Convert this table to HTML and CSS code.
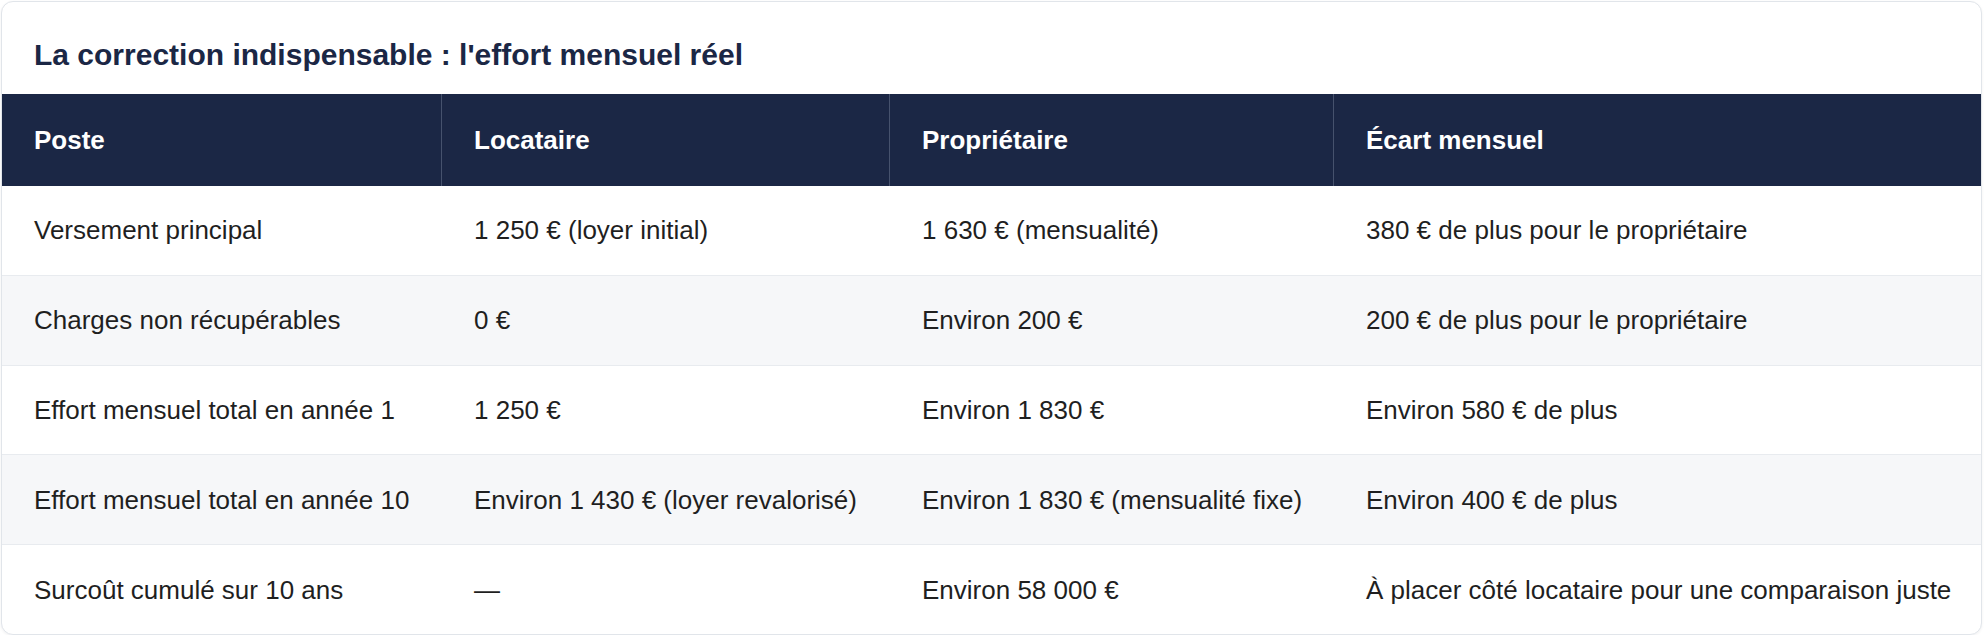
FILE: index.html
```html
<!DOCTYPE html>
<html lang="fr">
<head>
<meta charset="utf-8">
<title>L'effort mensuel réel</title>
<link rel="stylesheet" href="styles.css">
</head>
<body>
<section class="card">
  <h2 class="card-title">La correction indispensable : l'effort mensuel réel</h2>
  <table class="cmp">
    <colgroup>
      <col class="c1"><col class="c2"><col class="c3"><col class="c4">
    </colgroup>
    <thead>
      <tr><th>Poste</th><th>Locataire</th><th>Propriétaire</th><th>Écart mensuel</th></tr>
    </thead>
    <tbody>
      <tr><td>Versement principal</td><td>1 250 € (loyer initial)</td><td>1 630 € (mensualité)</td><td>380 € de plus pour le propriétaire</td></tr>
      <tr><td>Charges non récupérables</td><td>0 €</td><td>Environ 200 €</td><td>200 € de plus pour le propriétaire</td></tr>
      <tr><td>Effort mensuel total en année 1</td><td>1 250 €</td><td>Environ 1 830 €</td><td>Environ 580 € de plus</td></tr>
      <tr><td>Effort mensuel total en année 10</td><td>Environ 1 430 € (loyer revalorisé)</td><td>Environ 1 830 € (mensualité fixe)</td><td>Environ 400 € de plus</td></tr>
      <tr><td>Surcoût cumulé sur 10 ans</td><td>—</td><td>Environ 58 000 €</td><td>À placer côté locataire pour une comparaison juste</td></tr>
    </tbody>
  </table>
</section>
</body>
</html>
```

FILE: styles.css
```css
html, body {
  margin: 0;
  padding: 0;
  background: #ffffff;
}

body {
  font-family: "Liberation Sans", Arial, Helvetica, sans-serif;
  color: #222222;
}

.card {
  margin: 1px 2px 0 1px;
  border: 1px solid #e1e5ea;
  border-radius: 12px;
  overflow: hidden;
  background: #ffffff;
  box-shadow: 0 1px 3px rgba(15, 23, 42, 0.06);
}

.card-title {
  margin: 0;
  padding: 35px 32px 21px;
  font-size: 30px;
  line-height: 36px;
  font-weight: 700;
  color: #1b2745;
}

.cmp {
  width: 100%;
  border-collapse: separate;
  border-spacing: 0;
  table-layout: fixed;
  font-size: 26px;
  line-height: 30px;
}

.cmp .c1 { width: 439px; }
.cmp .c2 { width: 448px; }
.cmp .c3 { width: 444px; }

.cmp th {
  background: #1b2745;
  color: #ffffff;
  font-weight: 700;
  text-align: left;
  padding: 31px 32px;
  height: 30px;
}

.cmp th + th {
  border-left: 1px solid #46526d;
}

.cmp td {
  padding: 29.4px 32px;
  border-bottom: 1px solid #e8ebef;
  color: #1f1f1f;
  white-space: nowrap;
}

.cmp td + td {
  padding-left: 33px;
}

.cmp tbody tr:nth-child(even) td {
  background: #f6f7f9;
}

.cmp tbody tr:last-child td {
  border-bottom: none;
}
```
